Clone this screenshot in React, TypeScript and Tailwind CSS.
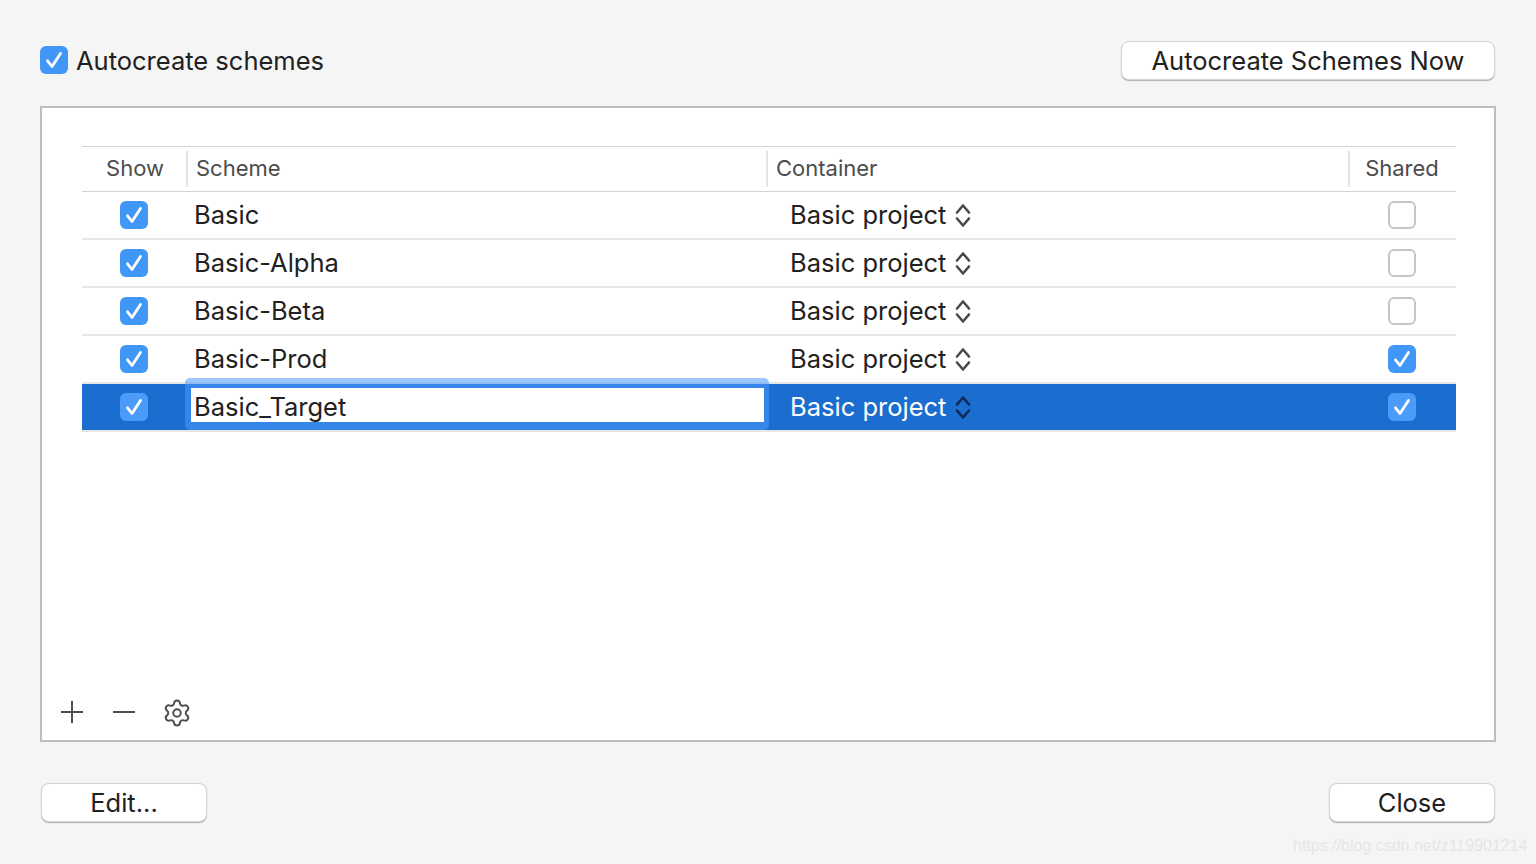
import { Settings } from 'lucide-react';

const rows = [
  { name: 'Basic', shared: false },
  { name: 'Basic-Alpha', shared: false },
  { name: 'Basic-Beta', shared: false },
  { name: 'Basic-Prod', shared: true },
  { name: 'Basic_Target', shared: true, selected: true },
];

function CheckBox({ checked = true, selected = false }: { checked?: boolean; selected?: boolean }) {
  if (!checked) {
    return <div className="w-[28px] h-[28px] rounded-[6px] bg-white border-2 border-[#c6c6c6]" />;
  }
  return (
    <div className={`w-[28px] h-[28px] rounded-[6px] flex items-center justify-center ${selected ? 'bg-[#4b9bf8]' : 'bg-[#4197f8]'}`}>
      <svg width="28" height="28" viewBox="0 0 28 28" fill="none">
        <path d="M7.5 14.8 L12 20.5 L20.5 7.5" stroke="white" strokeWidth="2.8" strokeLinecap="round" strokeLinejoin="round" />
      </svg>
    </div>
  );
}

function Stepper({ selected = false }: { selected?: boolean }) {
  const color = selected ? '#0d2a52' : '#4a4a4a';
  return (
    <svg width="16" height="26" viewBox="0 0 16 26" fill="none" className="ml-[9px]">
      <path d="M2 10.5 L8 3.5 L14 10.5" stroke={color} strokeWidth="2.6" strokeLinecap="round" strokeLinejoin="round" />
      <path d="M2 16.5 L8 23.5 L14 16.5" stroke={color} strokeWidth="2.6" strokeLinecap="round" strokeLinejoin="round" />
    </svg>
  );
}

function PushButton({ label, className }: { label: string; className: string }) {
  return (
    <button className={`h-[39px] pt-[1px] rounded-[8px] bg-white border border-[#d4d4d4] shadow-[0_1px_1px_rgba(0,0,0,0.28)] text-[25.5px] text-[#212121] flex items-center justify-center ${className}`}>
      {label}
    </button>
  );
}

export default function App() {
  return (
    <div
      className="relative w-[1536px] h-[864px] bg-[#f5f5f5] overflow-hidden flex flex-col pt-[41px] pl-[40px] pr-[40px]"
      style={{ fontFamily: 'Inter, "Liberation Sans", sans-serif' }}
    >
      <div className="flex items-start justify-between h-[40px] mr-[1px]">
        <div className="h-[40px] flex items-center gap-[8px] pb-[2px]">
          <CheckBox />
          <span className="pt-[2px] text-[25.5px] text-[#212121]">Autocreate schemes</span>
        </div>
        <PushButton label="Autocreate Schemes Now" className="w-[374px]" />
      </div>

      <div className="mt-[25px] h-[636px] bg-white border-2 border-[#bdbdbd] flex flex-col pt-[38px] pl-[40px] pr-[38px]">
        <div className="border-t border-[#d4d4d4]">
          {/* header */}
          <div className="flex h-[44px] items-center text-[22px] text-[#4c4c4c] border-b border-[#d4d4d4] box-content">
            <div className="w-[106px] h-[36px] flex items-center justify-center pl-[2px] pb-[2px] border-r-2 border-[#e4e4e4]">Show</div>
            <div className="w-[580px] h-[36px] flex items-center pl-[8px] pb-[2px] border-r-2 border-[#e4e4e4]">Scheme</div>
            <div className="w-[582px] h-[36px] flex items-center pl-[8px] pb-[2px] border-r-2 border-[#e4e4e4]">Container</div>
            <div className="flex-1 flex justify-center pr-[2px] pb-[2px]">Shared</div>
          </div>

          {rows.map((r) => (
            <div
              key={r.name}
              className={`flex h-[48px] items-center text-[25.5px] border-b-2 border-[#e6e6e6] ${r.selected ? 'bg-[#1c6dd0] text-white' : 'text-[#212121]'}`}
            >
              <div className="w-[106px] flex justify-center pr-[2px]"><CheckBox selected={r.selected} /></div>
              <div className="relative w-[580px] h-full flex items-center pl-[6px]">
                {r.selected ? (
                  <div className="absolute left-[-3px] top-[-6px] w-[584px] h-[52px] rounded-[5px] bg-[#4a9afc]/55 pl-[6px] pr-[5px] pt-[10px]">
                    <div className="h-[34px] pt-[5px] bg-white text-[#212121] flex items-center pl-[3px]">{r.name}</div>
                  </div>
                ) : (
                  r.name
                )}
              </div>
              <div className="w-[582px] flex items-center pl-[22px]">
                <span>Basic project</span>
                <Stepper selected={r.selected} />
              </div>
              <div className="flex-1 flex justify-center pr-[2px]"><CheckBox checked={r.shared} selected={r.selected} /></div>
            </div>
          ))}
        </div>

        <div className="mt-auto -ml-[40px] pl-[18px] h-[40px] flex items-start gap-[28px]">
          <svg width="24" height="24" viewBox="0 0 24 24" fill="none">
            <path d="M12 1 V23 M1 12 H23" stroke="#4f4f4f" strokeWidth="2" />
          </svg>
          <svg width="24" height="24" viewBox="0 0 24 24" fill="none">
            <path d="M1 12 H23" stroke="#4f4f4f" strokeWidth="2" />
          </svg>
          <Settings size={30} strokeWidth={1.6} className="-mt-[2px] -ml-[2px] text-[#4f4f4f]" />
        </div>
      </div>

      <div className="mt-[41px] flex justify-between px-[1px]">
        <PushButton label="Edit..." className="w-[166px]" />
        <PushButton label="Close" className="w-[166px]" />
      </div>

      <span
        className="absolute left-[1293px] top-[836px] text-[16px] leading-[20px] text-[#e6e6e6] whitespace-nowrap"
        style={{ fontFamily: '"Liberation Sans", sans-serif' }}
      >
        https://blog.csdn.net/z119901214
      </span>
    </div>
  );
}
